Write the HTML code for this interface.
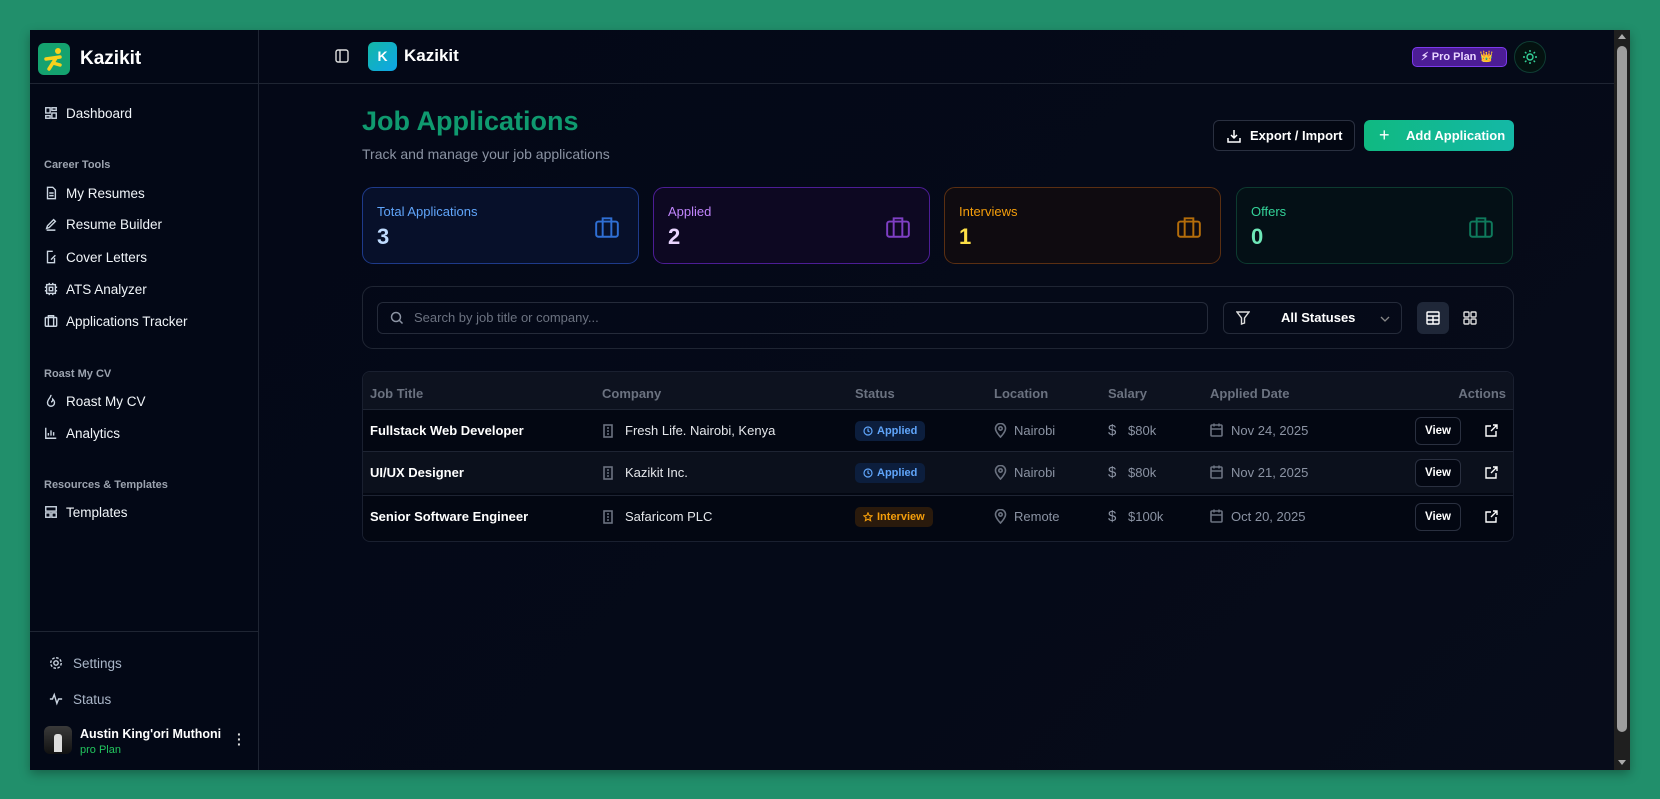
<!DOCTYPE html>
<html><head><meta charset="utf-8"><style>
*{box-sizing:border-box;margin:0;padding:0}
body{width:1660px;height:799px;background:#218f6b;font-family:"Liberation Sans",sans-serif;position:relative;overflow:hidden;color:#e5e7eb}
.win{position:absolute;left:30px;top:30px;width:1600px;height:740px;background:#030712;overflow:hidden;box-shadow:0 4px 10px rgba(0,0,0,.3)}
.abs{position:absolute}
.side{position:absolute;left:0;top:0;width:229px;height:740px;background:#030816;border-right:1px solid #1f2533}
.nav{position:absolute;left:14px;font-size:13.5px;color:#f1f5f9;display:flex;align-items:center;gap:8px;height:20px}
.nav svg{width:14px;height:14px;stroke:#cbd5e1;fill:none;stroke-width:1.6}
.sec{position:absolute;left:14px;font-size:11px;color:#9ca3af;font-weight:bold}
.main{position:absolute;left:229px;top:0;right:16px;height:740px;background:linear-gradient(135deg,#040817,#050a18 60%,#070c1a)}
.card{position:absolute;top:157px;height:77px;width:277px;border-radius:11px;border:1px solid}
.card .l{position:absolute;left:14px;top:16px;font-size:13px}
.card .n{position:absolute;left:14px;top:36px;font-size:22px;font-weight:bold}
.card svg{position:absolute;right:18px;top:26px;width:26px;height:26px;fill:none;stroke-width:1.8}
.th{position:absolute;top:14px;font-size:13px;color:#6b7280;font-weight:bold}
.row{position:absolute;left:0;right:0;height:42px;border-top:1px solid #1e2433;font-size:13px}
.row span,.row div{position:absolute}
.ic{stroke:#6b7280;fill:none;stroke-width:1.6}
.muted{color:#8b93a3}
.view{left:1052px;top:7px;width:46px;height:28px;border:1px solid #2a3040;border-radius:6px;background:#030712;color:#fff;font-weight:bold;font-size:11.5px;text-align:center;line-height:26px}
.badge{top:11px;height:20px;border-radius:5px;font-size:11px;font-weight:bold;line-height:20px;padding:0 8px 0 22px}
</style></head><body>
<div class="win">
 <div class="side">
  <div class="abs" style="left:8px;top:13px;width:32px;height:32px;border-radius:6px;background:#14a26f">
   <svg width="32" height="32" viewBox="0 0 32 32"><circle cx="20" cy="8" r="3" fill="#f6d21e"/><path d="M8 16 L22 14 M18 15 L11 26 M15 20 L22 22" stroke="#f6d21e" stroke-width="3.5" stroke-linecap="round" fill="none"/></svg>
  </div>
  <div class="abs" style="left:50px;top:18px;font-size:19px;font-weight:bold;color:#fff">Kazikit</div>
  <div class="abs" style="left:0;top:53px;width:229px;border-top:1px solid #1f2533"></div>
  <div class="nav" style="top:73px"><svg viewBox="0 0 16 16"><rect x="2" y="2" width="5" height="6"/><rect x="9" y="2" width="5" height="3"/><rect x="9" y="8" width="5" height="6"/><rect x="2" y="11" width="5" height="3"/></svg>Dashboard</div>
  <div class="sec" style="top:129px">Career Tools</div>
  <div class="nav" style="top:153px"><svg viewBox="0 0 16 16"><path d="M4 1.5h6l3 3v10H4z M6 8h5 M6 11h5"/></svg>My Resumes</div>
  <div class="nav" style="top:184px"><svg viewBox="0 0 16 16"><path d="M3 13l1-3 7-7 2 2-7 7z M3 15h10"/></svg>Resume Builder</div>
  <div class="nav" style="top:217px"><svg viewBox="0 0 16 16"><path d="M10 1.5H4v13h8V9 M8 11l5-5"/></svg>Cover Letters</div>
  <div class="nav" style="top:249px"><svg viewBox="0 0 16 16"><rect x="3" y="3" width="10" height="10"/><rect x="6" y="6" width="4" height="4"/><path d="M6 1v2M10 1v2M6 13v2M10 13v2M1 6h2M1 10h2M13 6h2M13 10h2"/></svg>ATS Analyzer</div>
  <div class="nav" style="top:281px"><svg viewBox="0 0 16 16"><rect x="1.5" y="4" width="13" height="10" rx="1"/><path d="M5 4V2h6v2 M5 4v10 M11 4v10"/></svg>Applications Tracker</div>
  <div class="sec" style="top:338px">Roast My CV</div>
  <div class="nav" style="top:361px"><svg viewBox="0 0 16 16"><path d="M8 1c0 3-4 5-4 9a4 4 0 008 0c0-2-1-3-2-4 0 2-1 3-2 3"/></svg>Roast My CV</div>
  <div class="nav" style="top:393px"><svg viewBox="0 0 16 16"><path d="M2 2v12h12 M5 11V8 M8 11V5 M11 11V7"/></svg>Analytics</div>
  <div class="sec" style="top:449px">Resources &amp; Templates</div>
  <div class="nav" style="top:472px"><svg viewBox="0 0 16 16"><rect x="2" y="2" width="12" height="5"/><rect x="2" y="9" width="5" height="5"/><rect x="9" y="9" width="5" height="5"/></svg>Templates</div>
  <div class="abs" style="left:0;top:601px;width:229px;border-top:1px solid #1f2533"></div>
  <div class="nav" style="top:623px;left:19px;color:#aab6c8;gap:10px"><svg viewBox="0 0 16 16"><circle cx="8" cy="8" r="2.5"/><circle cx="8" cy="8" r="6" stroke-dasharray="3 1.7"/></svg>Settings</div>
  <div class="nav" style="top:659px;left:19px;color:#aab6c8;gap:10px"><svg viewBox="0 0 16 16"><path d="M1 8h3l2-5 3 10 2-5h4"/></svg>Status</div>
  <div class="abs" style="left:14px;top:696px;width:28px;height:28px;border-radius:6px;background:linear-gradient(#3a3a3a,#111)"><div class="abs" style="left:10px;top:8px;width:8px;height:18px;background:#ddd;border-radius:3px 3px 0 0"></div></div>
  <div class="abs" style="left:50px;top:697px;font-size:12.5px;font-weight:bold;color:#fff">Austin King'ori Muthoni</div>
  <div class="abs" style="left:50px;top:714px;font-size:11px;color:#22c55e">pro Plan</div>
  <div class="abs" style="left:207px;top:702px;font-size:14px;color:#ddd;line-height:5px;font-weight:bold">·<br>·<br>·</div>
 </div>
 <div class="main">
  <div class="abs" style="left:0;top:53px;width:100%;border-top:1px solid #1f2533"></div>
  <svg class="abs" style="left:76px;top:19px" width="14" height="14" viewBox="0 0 14 14" fill="none" stroke="#ddd" stroke-width="1.4"><rect x="1" y="1" width="12" height="12" rx="2"/><path d="M5 1v12"/></svg>
  <div class="abs" style="left:109px;top:12px;width:29px;height:29px;border-radius:6px;background:linear-gradient(135deg,#14b8a6,#0ea5e9);color:#fff;font-weight:bold;font-size:14px;text-align:center;line-height:29px">K</div>
  <div class="abs" style="left:145px;top:16px;font-size:17px;font-weight:bold;color:#fff">Kazikit</div>
  <div class="abs" style="left:1153px;top:17px;width:95px;height:20px;border-radius:5px;background:#4c1d95;border:1px solid #7c3aed;font-size:11px;font-weight:bold;color:#e9d5ff;line-height:18px;padding-left:8px;white-space:nowrap;overflow:hidden">⚡︎ Pro Plan 👑</div>
  <div class="abs" style="left:1255px;top:11px;width:32px;height:32px;border-radius:50%;border:1px solid #0f3d33;background:#041210"><svg width="30" height="30" viewBox="0 0 30 30" fill="none" stroke="#34d399" stroke-width="1.4"><circle cx="15" cy="15" r="3"/><path d="M15 8v2M15 20v2M8 15h2M20 15h2M10 10l1.4 1.4M18.6 18.6l1.4 1.4M10 20l1.4-1.4M18.6 11.4l1.4-1.4"/></svg></div>

  <div class="abs" style="left:103px;top:76px;font-size:27px;font-weight:bold;color:#0f9a6f">Job Applications</div>
  <div class="abs" style="left:103px;top:116px;font-size:14px;color:#8b93a3">Track and manage your job applications</div>
  <div class="abs" style="left:954px;top:90px;width:142px;height:31px;border:1px solid #2a3040;border-radius:6px;font-size:13px;font-weight:bold;color:#fff;line-height:29px;padding-left:36px;background:#030712">Export / Import<svg class="abs" style="left:13px;top:8px" width="14" height="14" viewBox="0 0 14 14" fill="none" stroke="#fff" stroke-width="1.5"><path d="M7 1v8M4 6l3 3 3-3M1 9v4h12V9"/></svg></div>
  <div class="abs" style="left:1105px;top:90px;width:150px;height:31px;border-radius:6px;background:linear-gradient(90deg,#10b981,#14b8a6);font-size:13px;font-weight:bold;color:#fff;line-height:31px;padding-left:42px">Add Application<span class="abs" style="left:15px;top:0;font-size:18px;font-weight:normal">+</span></div>

  <div class="card" style="left:103px;border-color:#1e3a8a;background:#07102a"><div class="l" style="color:#60a5fa">Total Applications</div><div class="n" style="color:#bfdbfe">3</div><svg viewBox="0 0 24 24" stroke="#2f6fd4"><rect x="2" y="7" width="20" height="14" rx="2"/><path d="M8 7V4h8v3M8 7v14M16 7v14"/></svg></div>
  <div class="card" style="left:394px;border-color:#4c1d95;background:#0d0822"><div class="l" style="color:#c084fc">Applied</div><div class="n" style="color:#e9d5ff">2</div><svg viewBox="0 0 24 24" stroke="#7e3fc4"><rect x="2" y="7" width="20" height="14" rx="2"/><path d="M8 7V4h8v3M8 7v14M16 7v14"/></svg></div>
  <div class="card" style="left:685px;border-color:#5a2f12;background:#0f0b10"><div class="l" style="color:#f59e0b">Interviews</div><div class="n" style="color:#fde047">1</div><svg viewBox="0 0 24 24" stroke="#b46d0a"><rect x="2" y="7" width="20" height="14" rx="2"/><path d="M8 7V4h8v3M8 7v14M16 7v14"/></svg></div>
  <div class="card" style="left:977px;border-color:#0d3b30;background:#041016"><div class="l" style="color:#34d399">Offers</div><div class="n" style="color:#6ee7b7">0</div><svg viewBox="0 0 24 24" stroke="#0f7a5c"><rect x="2" y="7" width="20" height="14" rx="2"/><path d="M8 7V4h8v3M8 7v14M16 7v14"/></svg></div>

  <div class="abs" style="left:103px;top:256px;width:1152px;height:63px;border:1px solid #1f2533;border-radius:11px">
   <div class="abs" style="left:14px;top:15px;width:831px;height:32px;border:1px solid #252b3a;border-radius:6px;font-size:13px;color:#6b7280;line-height:30px;padding-left:36px">Search by job title or company...<svg class="abs" style="left:12px;top:8px" width="14" height="14" viewBox="0 0 14 14" fill="none" stroke="#8b93a3" stroke-width="1.5"><circle cx="6" cy="6" r="4.5"/><path d="M9.5 9.5l3 3"/></svg></div>
   <div class="abs" style="left:860px;top:15px;width:179px;height:32px;border:1px solid #252b3a;border-radius:6px;font-size:13px;font-weight:bold;color:#fff;line-height:30px;padding-left:57px">All Statuses<svg class="abs" style="left:12px;top:8px" width="14" height="14" viewBox="0 0 14 14" fill="none" stroke="#ddd" stroke-width="1.4"><path d="M1 1h12L8.5 7v5l-3 1V7z"/></svg><svg class="abs" style="left:156px;top:12px" width="10" height="8" viewBox="0 0 10 8" fill="none" stroke="#888" stroke-width="1.3"><path d="M1 2l4 4 4-4"/></svg></div>
   <div class="abs" style="left:1054px;top:15px;width:32px;height:32px;border-radius:6px;background:#1f2738"><svg class="abs" style="left:9px;top:9px" width="14" height="14" viewBox="0 0 14 14" fill="none" stroke="#fff" stroke-width="1.4"><rect x="1" y="1" width="12" height="12" rx="1"/><path d="M1 5h12M1 9h12M7 5v8"/></svg></div>
   <svg class="abs" style="left:1100px;top:24px" width="14" height="14" viewBox="0 0 14 14" fill="none" stroke="#ddd" stroke-width="1.4"><rect x="1" y="1" width="5" height="5" rx="1"/><rect x="8" y="1" width="5" height="5" rx="1"/><rect x="1" y="8" width="5" height="5" rx="1"/><rect x="8" y="8" width="5" height="5" rx="1"/></svg>
  </div>

  <div class="abs" style="left:103px;top:341px;width:1152px;height:171px;border:1px solid #1a2030;border-radius:8px;overflow:hidden;background:#030712">
   <div class="abs" style="left:0;top:0;width:100%;height:37px;background:#0d121f"></div>
   <div class="th" style="left:7px">Job Title</div><div class="th" style="left:239px">Company</div><div class="th" style="left:492px">Status</div><div class="th" style="left:631px">Location</div><div class="th" style="left:745px">Salary</div><div class="th" style="left:847px">Applied Date</div><div class="th" style="right:7px">Actions</div>

   <div class="row" style="top:37px;background:#030712">
    <span style="left:7px;top:13px;font-weight:bold;color:#fff">Fullstack Web Developer</span>
    <svg class="abs ic" style="left:239px;top:14px" width="13" height="14" viewBox="0 0 13 14"><rect x="2" y="1" width="8" height="12"/><path d="M5 4h2M5 7h2M5 10h2"/></svg><span style="left:262px;top:13px;color:#e5e7eb">Fresh Life. Nairobi, Kenya</span>
    <span class="badge" style="left:492px;background:#0c1e3d;color:#60a5fa">Applied<svg class="abs" style="left:8px;top:5px" width="10" height="10" viewBox="0 0 10 10" fill="none" stroke="#60a5fa" stroke-width="1.2"><circle cx="5" cy="5" r="4"/><path d="M5 2.5V5l1.5 1"/></svg></span>
    <svg class="abs ic" style="left:631px;top:13px" width="13" height="15" viewBox="0 0 13 15"><path d="M6.5 14s5-5 5-8.5a5 5 0 00-10 0C1.5 9 6.5 14 6.5 14z"/><circle cx="6.5" cy="5.5" r="1.7"/></svg><span class="muted" style="left:651px;top:13px">Nairobi</span>
    <span class="muted" style="left:745px;top:12px;font-size:15px">$</span><span class="muted" style="left:765px;top:13px">$80k</span>
    <svg class="abs ic" style="left:847px;top:13px" width="13" height="14" viewBox="0 0 13 14"><rect x="1" y="2" width="11" height="11" rx="1"/><path d="M1 6h11M4 0.5v3M9 0.5v3"/></svg><span class="muted" style="left:868px;top:13px">Nov 24, 2025</span>
    <span class="view">View</span>
    <svg class="abs" style="left:1122px;top:14px" width="13" height="13" viewBox="0 0 13 13" fill="none" stroke="#fff" stroke-width="1.4"><path d="M11 7v5H1V2h5M8 1h4v4M12 1L6 7"/></svg>
   </div>
   <div class="row" style="top:79px;background:#0b101c">
    <span style="left:7px;top:13px;font-weight:bold;color:#fff">UI/UX Designer</span>
    <svg class="abs ic" style="left:239px;top:14px" width="13" height="14" viewBox="0 0 13 14"><rect x="2" y="1" width="8" height="12"/><path d="M5 4h2M5 7h2M5 10h2"/></svg><span style="left:262px;top:13px;color:#e5e7eb">Kazikit Inc.</span>
    <span class="badge" style="left:492px;background:#0c1e3d;color:#60a5fa">Applied<svg class="abs" style="left:8px;top:5px" width="10" height="10" viewBox="0 0 10 10" fill="none" stroke="#60a5fa" stroke-width="1.2"><circle cx="5" cy="5" r="4"/><path d="M5 2.5V5l1.5 1"/></svg></span>
    <svg class="abs ic" style="left:631px;top:13px" width="13" height="15" viewBox="0 0 13 15"><path d="M6.5 14s5-5 5-8.5a5 5 0 00-10 0C1.5 9 6.5 14 6.5 14z"/><circle cx="6.5" cy="5.5" r="1.7"/></svg><span class="muted" style="left:651px;top:13px">Nairobi</span>
    <span class="muted" style="left:745px;top:12px;font-size:15px">$</span><span class="muted" style="left:765px;top:13px">$80k</span>
    <svg class="abs ic" style="left:847px;top:13px" width="13" height="14" viewBox="0 0 13 14"><rect x="1" y="2" width="11" height="11" rx="1"/><path d="M1 6h11M4 0.5v3M9 0.5v3"/></svg><span class="muted" style="left:868px;top:13px">Nov 21, 2025</span>
    <span class="view">View</span>
    <svg class="abs" style="left:1122px;top:14px" width="13" height="13" viewBox="0 0 13 13" fill="none" stroke="#fff" stroke-width="1.4"><path d="M11 7v5H1V2h5M8 1h4v4M12 1L6 7"/></svg>
   </div>
   <div class="row" style="top:123px;background:#030712">
    <span style="left:7px;top:13px;font-weight:bold;color:#fff">Senior Software Engineer</span>
    <svg class="abs ic" style="left:239px;top:14px" width="13" height="14" viewBox="0 0 13 14"><rect x="2" y="1" width="8" height="12"/><path d="M5 4h2M5 7h2M5 10h2"/></svg><span style="left:262px;top:13px;color:#e5e7eb">Safaricom PLC</span>
    <span class="badge" style="left:492px;background:#2a1a0c;color:#f59e0b">Interview<svg class="abs" style="left:8px;top:5px" width="10" height="10" viewBox="0 0 10 10" fill="none" stroke="#f59e0b" stroke-width="1.1"><path d="M5 0.8l1.2 2.7 2.9.3-2.2 1.9.7 2.9L5 7.1 2.4 8.6l.7-2.9L.9 3.8l2.9-.3z"/></svg></span>
    <svg class="abs ic" style="left:631px;top:13px" width="13" height="15" viewBox="0 0 13 15"><path d="M6.5 14s5-5 5-8.5a5 5 0 00-10 0C1.5 9 6.5 14 6.5 14z"/><circle cx="6.5" cy="5.5" r="1.7"/></svg><span class="muted" style="left:651px;top:13px">Remote</span>
    <span class="muted" style="left:745px;top:12px;font-size:15px">$</span><span class="muted" style="left:765px;top:13px">$100k</span>
    <svg class="abs ic" style="left:847px;top:13px" width="13" height="14" viewBox="0 0 13 14"><rect x="1" y="2" width="11" height="11" rx="1"/><path d="M1 6h11M4 0.5v3M9 0.5v3"/></svg><span class="muted" style="left:868px;top:13px">Oct 20, 2025</span>
    <span class="view">View</span>
    <svg class="abs" style="left:1122px;top:14px" width="13" height="13" viewBox="0 0 13 13" fill="none" stroke="#fff" stroke-width="1.4"><path d="M11 7v5H1V2h5M8 1h4v4M12 1L6 7"/></svg>
   </div>
  </div>
 </div>
 <div class="abs" style="right:0;top:0;width:16px;height:740px;background:#1f1f1f">
  <div class="abs" style="left:4px;top:4px;width:0;height:0;border-left:4px solid transparent;border-right:4px solid transparent;border-bottom:5px solid #aaa"></div>
  <div class="abs" style="left:3px;top:16px;width:10px;height:686px;border-radius:5px;background:#9e9e9e"></div>
  <div class="abs" style="left:4px;bottom:5px;width:0;height:0;border-left:4px solid transparent;border-right:4px solid transparent;border-top:5px solid #aaa"></div>
 </div>
</div>
</body></html>
